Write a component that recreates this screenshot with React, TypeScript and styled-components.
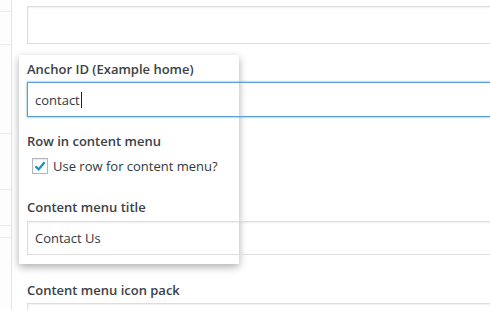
import React from "react";
import styled, { createGlobalStyle } from "styled-components";

const GlobalStyle = createGlobalStyle`
  html, body {
    margin: 0;
    padding: 0;
    background: #fff;
    font-family: "Open Sans", "Liberation Sans", sans-serif;
    font-size: 13px;
    color: #32373c;
  }
`;

const Page = styled.div`
  display: flex;
  width: 490px;
  height: 310px;
  overflow: hidden;
`;

const Strip = styled.div`
  width: 11px;
  flex: none;
  border-right: 1px solid #e5e5e5;
  background: #fdfdfd;
  display: flex;
  flex-direction: column;
`;

const StripRow = styled.div<{ $h: number }>`
  height: ${(p) => p.$h}px;
  flex: none;
  border-bottom: 1px solid #ececec;
`;

const Content = styled.div`
  flex: 1;
  padding: 6px 0 0 15px;
  display: flex;
  flex-direction: column;

  & > * {
    flex-shrink: 0;
  }
`;

const Input = styled.div<{ $h: number; $top?: number; $focus?: boolean }>`
  position: relative;
  z-index: 1;
  flex-shrink: 0;
  box-sizing: border-box;
  height: ${(p) => p.$h}px;
  margin: ${(p) => p.$top ?? 0}px -20px 0 0;
  padding: 0 7px;
  display: flex;
  align-items: center;
  border: 1px solid ${(p) => (p.$focus ? "#5b9dd9" : "#dddddd")};
  box-shadow: ${(p) =>
    p.$focus
      ? "0 0 2px rgba(30, 140, 190, 0.8)"
      : "inset 0 1px 2px rgba(0, 0, 0, 0.07)"};
  font-size: 13px;
  color: #32373c;
`;

const Caret = styled.span`
  display: inline-block;
  width: 1px;
  height: 16px;
  margin-left: 1px;
  background: #222;
`;

const Label = styled.div<{ $top: number }>`
  position: relative;
  z-index: 1;
  flex-shrink: 0;
  margin-top: ${(p) => p.$top}px;
  line-height: 18px;
  font-weight: 600;
  color: #3c4146;
`;

const Popup = styled.div`
  position: relative;
  margin-top: 11px;
  padding: 5px 0 9px;
  display: flex;
  flex-direction: column;

  &::before {
    content: "";
    position: absolute;
    top: 0;
    bottom: 0;
    left: -8px;
    width: 220px;
    background: #fff;
    box-shadow: 0 3px 8px rgba(0, 0, 0, 0.32);
  }
`;

const CheckRow = styled.label`
  position: relative;
  z-index: 1;
  flex-shrink: 0;
  margin-top: 7px;
  padding-left: 5px;
  display: flex;
  align-items: center;
  gap: 5px;
  line-height: 18px;
`;

const Box = styled.span`
  box-sizing: border-box;
  width: 16px;
  height: 16px;
  border: 1px solid #b4b9be;
  background: #fff;
  box-shadow: inset 0 1px 2px rgba(0, 0, 0, 0.1);
  display: flex;
  align-items: center;
  justify-content: center;
`;

export default function App() {
  return (
    <>
      <GlobalStyle />
      <Page>
        <Strip>
          <StripRow $h={11} />
          <StripRow $h={32} />
          <StripRow $h={88} />
          <StripRow $h={55} />
          <StripRow $h={35} />
          <StripRow $h={11} />
        </Strip>
        <Content>
          <Input $h={38} />
          <Popup>
            <Label $top={0}>Anchor ID (Example home)</Label>
            <Input $h={35} $top={4} $focus>
              contact
              <Caret />
            </Input>
            <Label $top={15}>Row in content menu</Label>
            <CheckRow>
              <Box>
                <svg width="12" height="12" viewBox="0 0 12 12">
                  <path
                    d="M1.5 6.2 L4.6 9.4 L10.6 2.2"
                    fill="none"
                    stroke="#1e8cbe"
                    strokeWidth="2.2"
                  />
                </svg>
              </Box>
              Use row for content menu?
            </CheckRow>
            <Label $top={23}>Content menu title</Label>
            <Input $h={34} $top={5}>
              Contact Us
            </Input>
          </Popup>
          <Label $top={17}>Content menu icon pack</Label>
          <Input $h={34} $top={4} />
        </Content>
      </Page>
    </>
  );
}
